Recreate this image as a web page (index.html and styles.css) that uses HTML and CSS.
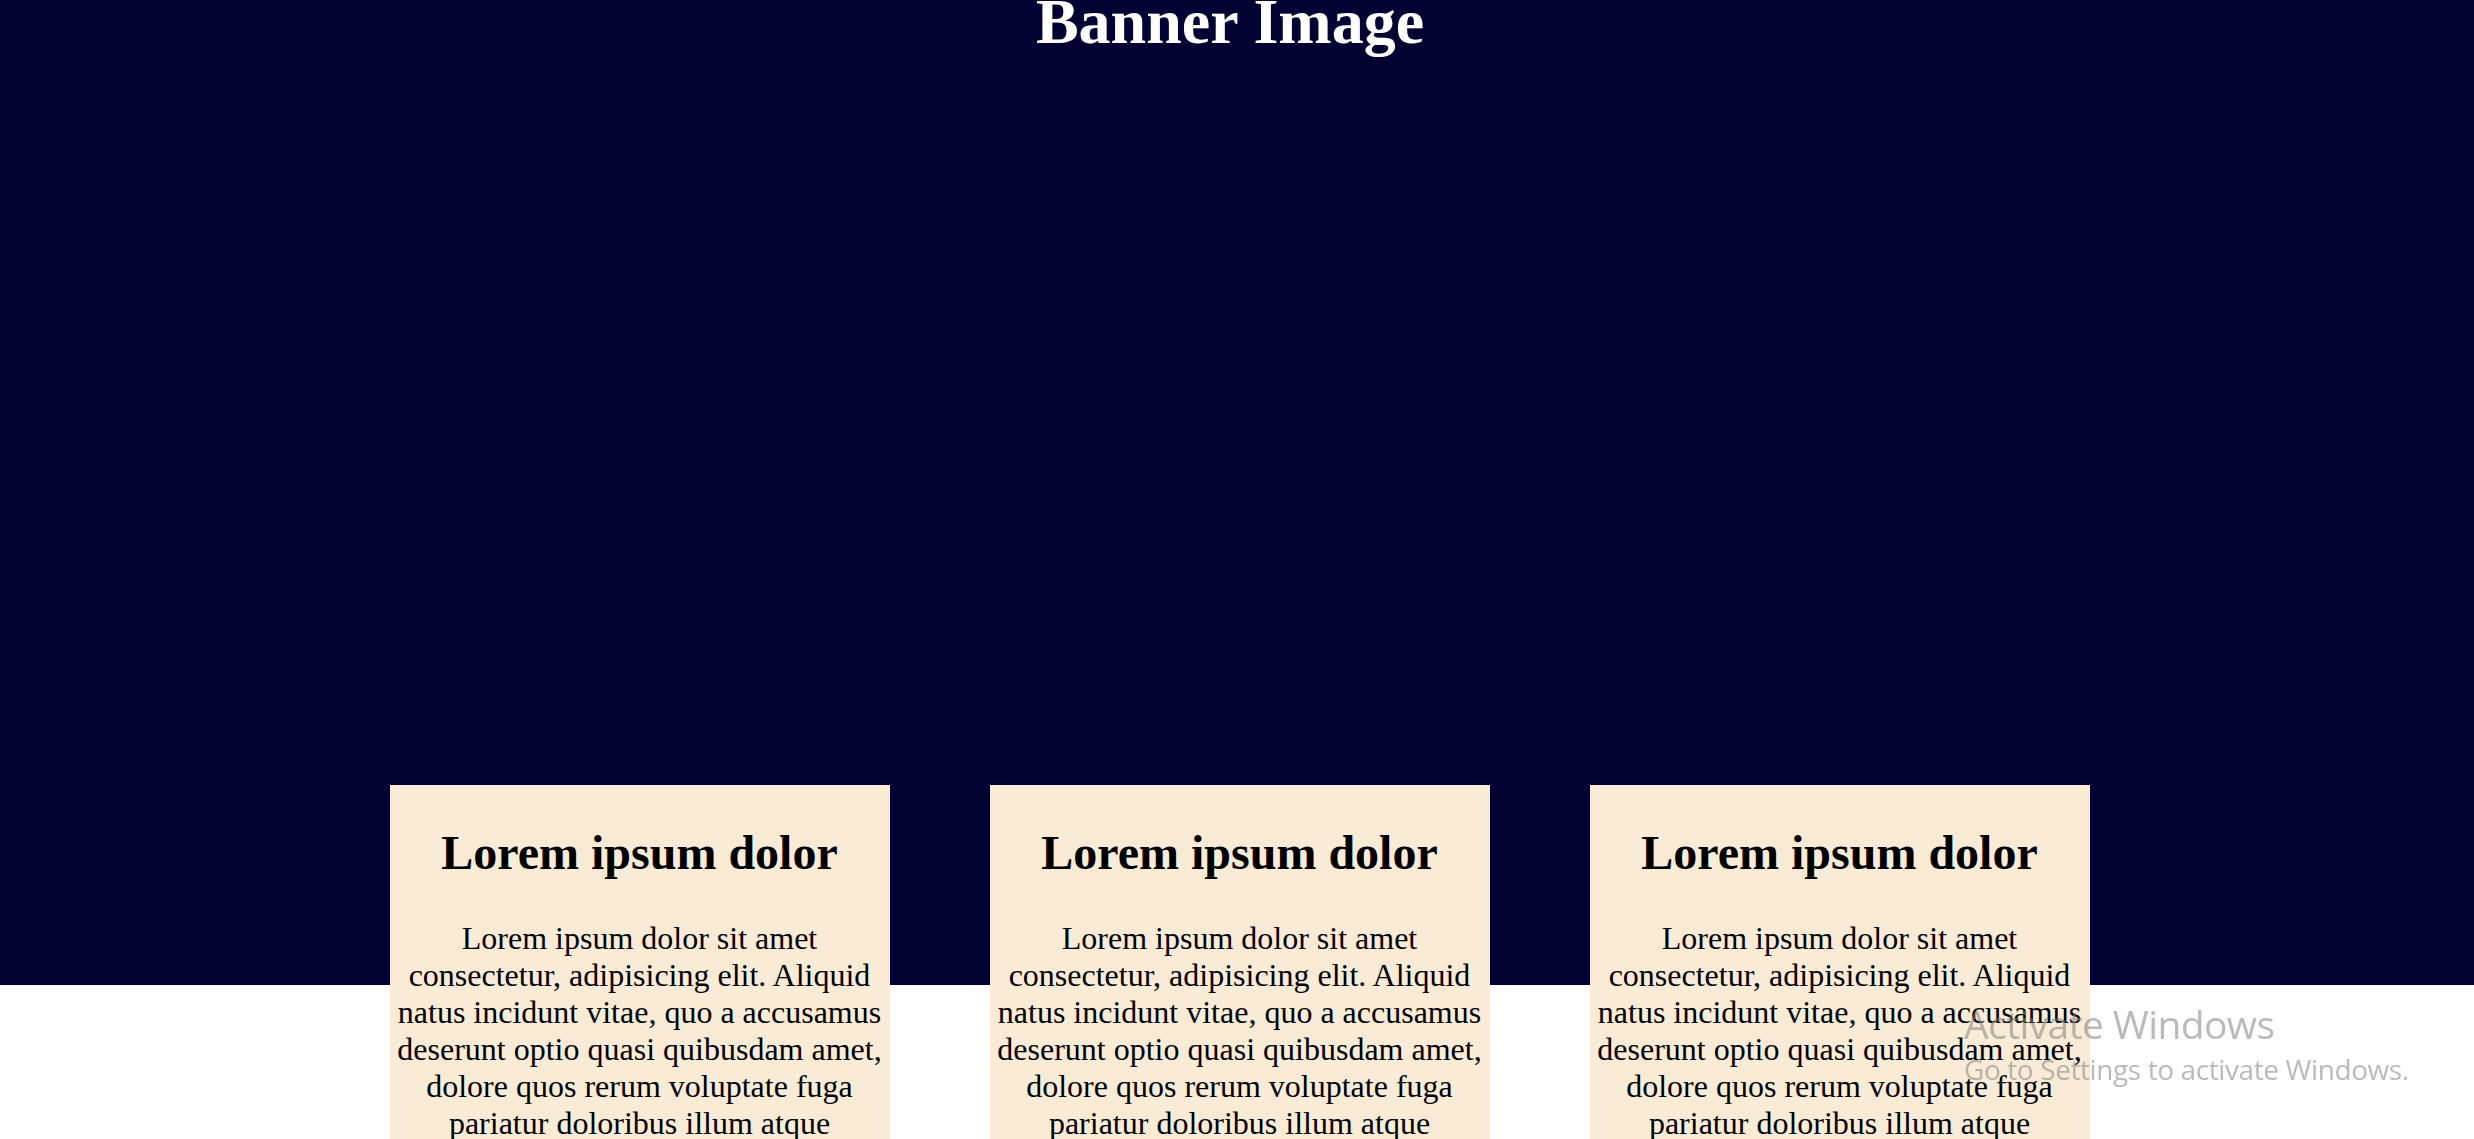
FILE: index.html
```html
<!DOCTYPE html>
<html lang="en">
<head>
<meta charset="UTF-8">
<title>Banner</title>
<link rel="stylesheet" href="styles.css">
</head>
<body>
  <header class="banner">
    <h1 class="banner-title">Banner Image</h1>
  </header>
  <main class="cards">
    <article class="card">
      <h2 class="card-title">Lorem ipsum dolor</h2>
      <p class="card-text">Lorem ipsum dolor sit amet consectetur, adipisicing elit. Aliquid natus incidunt vitae, quo a accusamus deserunt optio quasi quibusdam amet, dolore quos rerum voluptate fuga pariatur doloribus illum atque recusandae, nemo quae ipsa.</p>
    </article>
    <article class="card">
      <h2 class="card-title">Lorem ipsum dolor</h2>
      <p class="card-text">Lorem ipsum dolor sit amet consectetur, adipisicing elit. Aliquid natus incidunt vitae, quo a accusamus deserunt optio quasi quibusdam amet, dolore quos rerum voluptate fuga pariatur doloribus illum atque recusandae, nemo quae ipsa.</p>
    </article>
    <article class="card">
      <h2 class="card-title">Lorem ipsum dolor</h2>
      <p class="card-text">Lorem ipsum dolor sit amet consectetur, adipisicing elit. Aliquid natus incidunt vitae, quo a accusamus deserunt optio quasi quibusdam amet, dolore quos rerum voluptate fuga pariatur doloribus illum atque recusandae, nemo quae ipsa.</p>
    </article>
  </main>
  <div class="activate">
    <div class="activate-title">Activate Windows</div>
    <div class="activate-sub">Go to Settings to activate Windows.</div>
  </div>
</body>
</html>
```

FILE: styles.css
```css
html, body {
  margin: 0;
  padding: 0;
  background: #ffffff;
  font-family: "Liberation Serif", "Times New Roman", serif;
  color: #000000;
  overflow: hidden;
}

.banner {
  display: flow-root;
  height: 985px;
  background: #030333;
  text-align: center;
}

.banner-title {
  margin: -15px 0 0;
  padding-right: 14px;
  font-size: 64px;
  font-weight: bold;
  color: #ffffff;
}

.cards {
  display: flex;
  justify-content: center;
  gap: 100px;
  margin-top: -200px;
  padding-left: 5px;
}

.card {
  width: 500px;
  background: #faebd7;
  text-align: center;
}

.card-title {
  margin: 0.83em 0;
  font-size: 48px;
  font-weight: bold;
}

.card-text {
  margin: 1em 0;
  font-size: 32px;
}

.activate {
  position: fixed;
  left: 1964px;
  top: 999px;
  font-family: "Open Sans", "Noto Sans", sans-serif;
  color: rgba(130, 130, 130, 0.55);
  pointer-events: none;
}

.activate-title {
  font-size: 39px;
  line-height: 50px;
  letter-spacing: -0.6px;
}

.activate-sub {
  font-size: 28px;
  line-height: 40px;
  letter-spacing: -0.4px;
}
```
